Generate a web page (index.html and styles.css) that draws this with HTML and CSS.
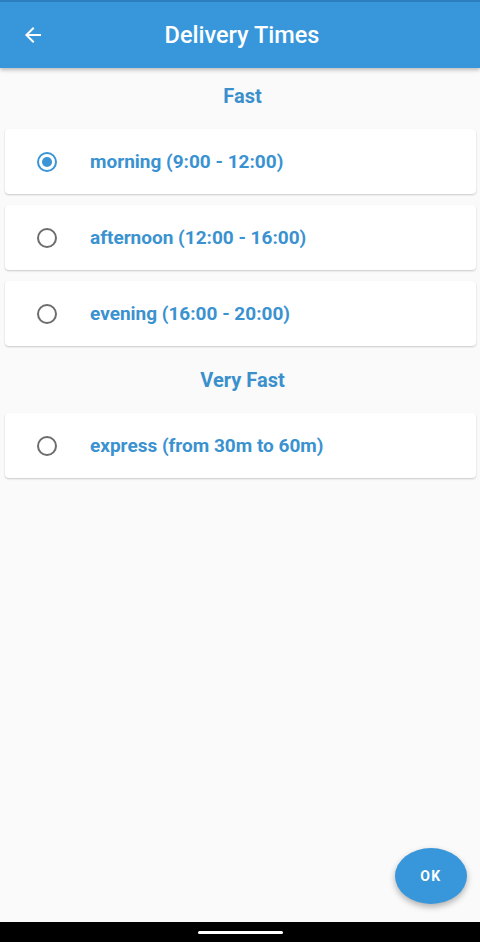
FILE: index.html
```html
<!DOCTYPE html>
<html lang="en">
<head>
    <meta charset="UTF-8">
    <meta name="viewport" content="width=device-width, initial-scale=1.0">
    <title>Delivery Times</title>
    <link rel="stylesheet" href="styles.css">
</head>
<body>
    <div class="screen">
      <div class="appBar">
        <button class="backButton" aria-label="Back">
          <svg width="24" height="24" viewBox="0 0 24 24"><path d="M20 11H7.83l5.59-5.59L12 4l-8 8 8 8 1.41-1.41L7.83 13H20v-2z" fill="#ffffff"/></svg>
        </button>
        <div class="title">Delivery Times</div>
      </div>

      <div class="content">
        <div class="sectionTitle">Fast</div>
        <label class="card">
          <span class="radio checked"></span>
          <span class="label">morning (9:00 - 12:00)</span>
        </label>
        <label class="card">
          <span class="radio"></span>
          <span class="label">afternoon (12:00 - 16:00)</span>
        </label>
        <label class="card">
          <span class="radio"></span>
          <span class="label">evening (16:00 - 20:00)</span>
        </label>

        <div class="sectionTitle">Very Fast</div>
        <label class="card">
          <span class="radio"></span>
          <span class="label">express (from 30m to 60m)</span>
        </label>
      </div>

      <button class="fab">OK</button>

      <div class="navBar"><div class="handle"></div></div>
    </div>
</body>
</html>
```

FILE: styles.css
```css
* {
    box-sizing: border-box;
}
body {
    margin: 0;
    font-family: Roboto, "Noto Sans", sans-serif;
    background-color: #fafafa;
}
.screen {
    position: relative;
    display: flex;
    flex-direction: column;
    width: 480px;
    height: 942px;
    overflow: hidden;
}
.appBar {
    position: relative;
    z-index: 1;
    display: flex;
    align-items: center;
    height: 68px;
    border-top: 2px solid #2b7fbf;
    background-color: #3897da;
    box-shadow: 0 2px 4px rgba(0, 0, 0, 0.25);
}
.backButton {
    display: flex;
    align-items: center;
    justify-content: center;
    width: 24px;
    height: 24px;
    margin-left: 21px;
    padding: 0;
    border: none;
    background: none;
}
.title {
    flex: 1;
    margin-right: 41px;
    text-align: center;
    color: #ffffff;
    font-size: 23.5px;
    font-weight: 500;
}
.content {
    flex: 1;
    padding-top: 5px;
}
.sectionTitle {
    padding: 11px 0 21px 5px;
    line-height: 24px;
    text-align: center;
    color: #3a90cc;
    font-size: 20px;
    font-weight: 700;
}
.card {
    display: flex;
    align-items: center;
    height: 65px;
    margin: 0 4px 11px 5px;
    padding-left: 32px;
    border-radius: 4px;
    background-color: #ffffff;
    box-shadow: 0 1px 2px rgba(0, 0, 0, 0.2);
}
.radio {
    position: relative;
    width: 20px;
    height: 20px;
    border: 2px solid #6d6d6d;
    border-radius: 50%;
}
.radio.checked {
    border-color: #3a94d6;
}
.radio.checked::after {
    content: "";
    position: absolute;
    top: 3px;
    left: 3px;
    width: 10px;
    height: 10px;
    border-radius: 50%;
    background-color: #3a94d6;
}
.label {
    margin-left: 33px;
    color: #3a92d0;
    font-size: 19px;
    font-weight: 700;
}
.fab {
    position: absolute;
    right: 13px;
    bottom: 38px;
    width: 72px;
    height: 56px;
    border: none;
    border-radius: 50%;
    background-color: #3897da;
    color: #ffffff;
    font-family: Roboto, sans-serif;
    font-size: 14px;
    font-weight: 700;
    letter-spacing: 1.5px;
    box-shadow: 0 3px 6px rgba(0, 0, 0, 0.3);
}
.navBar {
    display: flex;
    justify-content: center;
    align-items: center;
    height: 20px;
    background-color: #000000;
}
.handle {
    width: 85px;
    height: 3px;
    border-radius: 2px;
    background-color: #ffffff;
}
```
